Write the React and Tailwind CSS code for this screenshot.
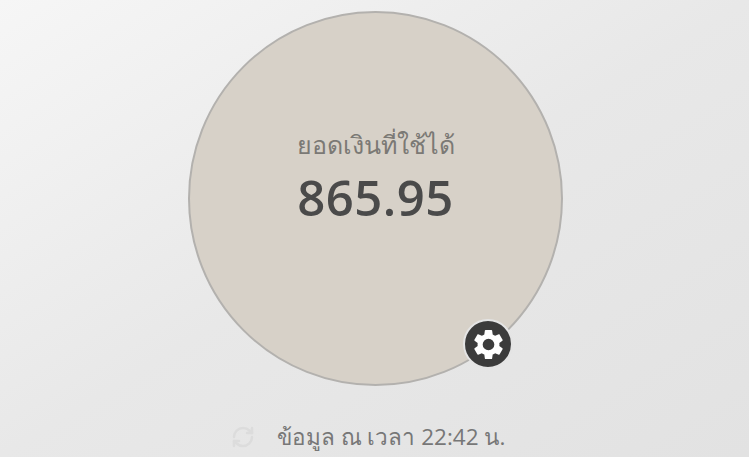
import React from 'react';
import { RefreshCw } from 'lucide-react';

const GearIcon = () => (
  <svg viewBox="0 0 24 24" className="w-[35px] h-[35px]" fill="#ffffff">
    <path
      fillRule="evenodd"
      d="M19.43 12.98c.04-.32.07-.64.07-.98s-.03-.66-.07-.98l2.11-1.65c.19-.15.24-.42.12-.64l-2-3.46c-.12-.22-.39-.3-.61-.22l-2.49 1c-.52-.4-1.08-.73-1.69-.98l-.38-2.65C14.46 2.18 14.25 2 14 2h-4c-.25 0-.46.18-.49.42l-.38 2.65c-.61.25-1.17.59-1.69.98l-2.49-1c-.23-.09-.49 0-.61.22l-2 3.46c-.13.22-.07.49.12.64l2.11 1.65c-.04.32-.07.65-.07.98s.03.66.07.98l-2.11 1.65c-.19.15-.24.42-.12.64l2 3.46c.12.22.39.3.61.22l2.49-1c.52.4 1.08.73 1.69.98l.38 2.65c.03.24.24.42.49.42h4c.25 0 .46-.18.49-.42l.38-2.65c.61-.25 1.17-.59 1.69-.98l2.49 1c.23.09.49 0 .61-.22l2-3.46c.12-.22.07-.49-.12-.64l-2.11-1.65zM12 16a4 4 0 1 1 0-8 4 4 0 0 1 0 8z"
    />
  </svg>
);

const App = () => {
  return (
    <div className="w-[749px] h-[457px] overflow-hidden bg-gradient-to-br from-[#f6f6f6] via-[#e8e8e8] to-[#e2e2e2] flex flex-col items-center pt-[11px] font-['Open_Sans','Noto_Sans','DejaVu_Sans',sans-serif]">
      {/* Balance circle */}
      <div className="relative ml-[2px] w-[375px] h-[375px] rounded-full bg-[#d7d1c8] border-2 border-[#b3b1ae] flex flex-col items-center justify-center pb-[45px]">
        <p className="text-[25px] leading-[34px] text-[#7b7975]">ยอดเงินที่ใช้ได้</p>
        <p className="mt-[7px] text-[49px] leading-[58px] font-semibold tracking-[0.5px] text-[#4a4a4a]">865.95</p>
        <button className="absolute left-[273px] top-[306px] w-[50px] h-[50px] rounded-full bg-[#3b3b3b] border-2 border-[#e4e4e4] flex items-center justify-center">
          <GearIcon />
        </button>
      </div>

      {/* Last update */}
      <div className="mt-[35px] mr-[13px] flex items-center gap-[22px]">
        <RefreshCw className="w-[24px] h-[24px] text-[#dcdcdc]" strokeWidth={2.5} />
        <span className="text-[22.5px] leading-[32px] text-[#777777]">ข้อมูล ณ เวลา 22:42 น.</span>
      </div>
    </div>
  );
};

export default App;
